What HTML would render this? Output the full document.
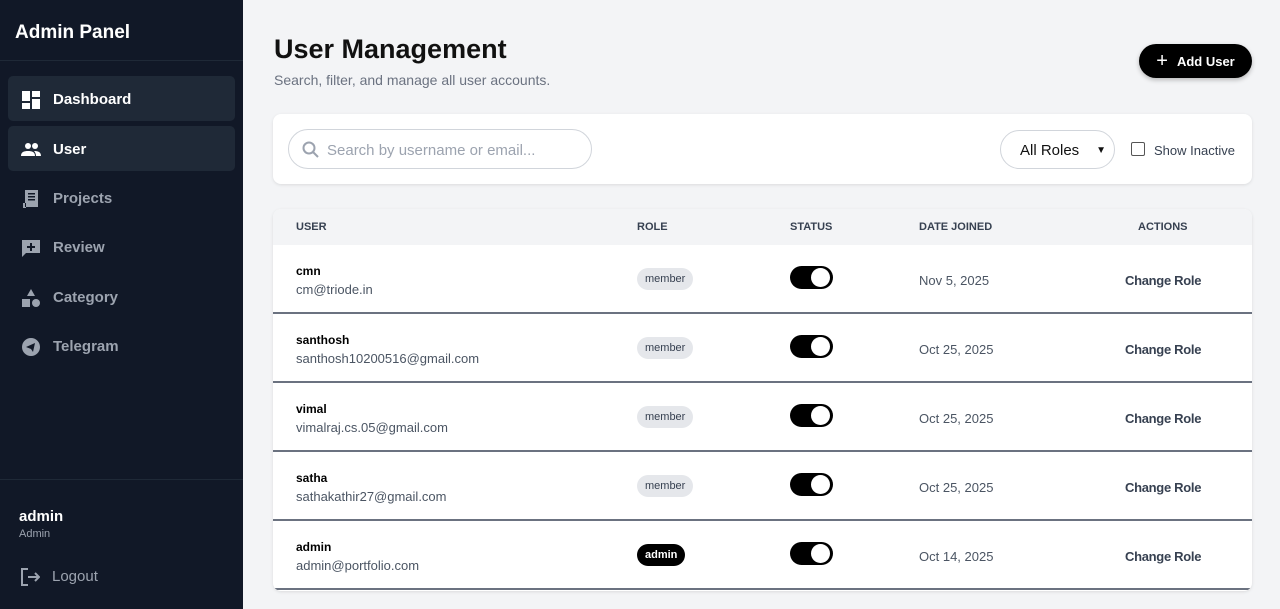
<!DOCTYPE html>
<html><head><style>
*{box-sizing:border-box;margin:0;padding:0}
body{width:1280px;height:609px;overflow:hidden;font-family:"Liberation Sans",sans-serif;background:#f3f4f6;position:relative}
.sb{position:absolute;left:0;top:0;width:243px;height:609px;background:#111827;color:#fff}
.sb h1{font-size:19px;font-weight:600;position:absolute;left:15px;top:22px}
.sb .line{position:absolute;left:0;right:0;height:1px;background:#1f2937}
.nav{position:absolute;left:8px;width:227px;height:45px;border-radius:5px;display:flex;align-items:center;padding-left:13px;padding-top:2px;font-size:15px;font-weight:600;color:#9ca3af}
.nav.a{background:#1f2937;color:#fff}
.nav svg{width:20px;height:20px;margin-right:12px;fill:currentColor}
.main{position:absolute;left:243px;top:0;right:0;bottom:0}
.t{position:absolute;left:31px;top:34px;font-size:27px;font-weight:700;color:#111}
.st{position:absolute;left:31px;top:72px;font-size:14px;color:#6b7280}
.btn{position:absolute;left:896px;top:44px;width:113px;height:34px;background:#000;color:#fff;border-radius:17px;font-size:13px;font-weight:700;display:flex;align-items:center;justify-content:center;box-shadow:0 2px 5px rgba(0,0,0,.25)}
.card{position:absolute;background:#fff;border-radius:8px;box-shadow:0 1px 3px rgba(0,0,0,.1)}
.search{position:absolute;left:15px;top:15px;width:304px;height:40px;border:1px solid #d1d5db;border-radius:20px;font-size:15px;color:#9ca3af;display:flex;align-items:center;padding-left:38px;padding-top:2px}
.sel{position:absolute;left:727px;top:16px;width:115px;height:39px;border:1px solid #d1d5db;border-radius:20px;font-size:15px;color:#111;display:flex;align-items:center;padding-left:19px;padding-top:2px}
.th{position:absolute;top:0;height:36px;line-height:36px;font-size:11px;font-weight:700;color:#374151}
.row{position:absolute;left:0;width:979px;height:69px;border-bottom:2px solid #6b7280}
.row .n{position:absolute;left:23px;top:19px;font-size:12px;font-weight:700;color:#000}
.row .e{position:absolute;left:23px;top:37px;font-size:13px;color:#4b5563}
.badge{position:absolute;left:364px;top:23px;height:22px;padding:0 8px;border-radius:11px;background:#e5e7eb;font-size:11px;line-height:23px;color:#374151}
.badge.ad{background:#000;color:#fff;font-weight:700;left:364px}
.tg{position:absolute;left:517px;top:21px;width:43px;height:23px;border-radius:12px;background:#000}
.tg:after{content:"";position:absolute;right:3px;top:2px;width:19px;height:19px;border-radius:50%;background:#fff}
.d{position:absolute;left:646px;top:28px;font-size:13px;color:#4b5563}
.c{position:absolute;left:852px;top:28px;font-size:13px;font-weight:600;color:#374151;letter-spacing:-0.3px}
</style></head><body>
<div class="sb">
<h1>Admin Panel</h1>
<div class="line" style="top:60px"></div>
<div class="nav a" style="top:76px"><svg viewBox="0 0 20 20"><path d="M1 1h8v10H1zM11 1h8v6h-8zM11 9h8v10h-8zM1 13h8v6H1z"/></svg>Dashboard</div>
<div class="nav a" style="top:126px"><svg viewBox="0 0 20 20"><circle cx="7" cy="6" r="3"/><circle cx="14" cy="6" r="3"/><path d="M0 16c0-4 3-5 7-5s7 1 7 5zM15 16c0-2-1-4-2-5 4 0 7 1 7 5z"/></svg>User</div>
<div class="nav" style="top:175px"><svg viewBox="0 0 20 20"><path fill-rule="evenodd" d="M4 1h13v17H4zM7 4v1.5h7V4zM7 7v1.5h7V7zM7 10v1.5h7V10zM2 14h3v5H2z"/></svg>Projects</div>
<div class="nav" style="top:224px"><svg viewBox="0 0 20 20"><path d="M1 2h18v13H5l-4 4zM9 5h2v3h3v2h-3v3H9v-3H6V8h3z" fill-rule="evenodd"/></svg>Review</div>
<div class="nav" style="top:274px"><svg viewBox="0 0 20 20"><path d="M10 1l4 7H6zM1 11h8v8H1z"/><circle cx="15" cy="15" r="4"/></svg>Category</div>
<div class="nav" style="top:323px"><svg viewBox="0 0 20 20"><path d="M10 1a9 9 0 100 18 9 9 0 000-18zM5 10l9-4-2 9-2-3z"/></svg>Telegram</div>
<div class="line" style="top:479px"></div>
<div style="position:absolute;left:19px;top:508px;font-size:15px;font-weight:700">admin</div>
<div style="position:absolute;left:19px;top:528px;font-size:11px;color:#9ca3af">Admin</div>
<div class="nav" style="top:553px;left:8px;padding-left:12px;font-weight:500"><svg viewBox="0 0 20 20" fill="none" stroke="#9ca3af" stroke-width="2" style="fill:none"><path d="M8 2H2v16h6M8 10h11M15 6l4 4-4 4"/></svg>Logout</div>
</div>
<div class="main">
<div class="t">User Management</div>
<div class="st">Search, filter, and manage all user accounts.</div>
<div class="btn"><span style="font-size:20px;font-weight:400;margin-right:9px;line-height:1">+</span>Add User</div>
<div class="card" style="left:30px;top:114px;width:979px;height:70px">
<div class="search"><svg style="position:absolute;left:13px;top:11px" width="17" height="17" viewBox="0 0 17 17" fill="none" stroke="#9ca3af" stroke-width="2"><circle cx="7" cy="7" r="5.5"/><path d="M11 11l5 5"/></svg>Search by username or email...</div>
<div class="sel">All Roles<span style="position:absolute;right:8px;font-size:10px">&#9660;</span></div>
<div style="position:absolute;left:858px;top:28px;width:14px;height:14px;border:1px solid #555;border-radius:2px"></div>
<div style="position:absolute;left:881px;top:29px;font-size:13px;color:#374151">Show Inactive</div>
</div>
<div class="card" style="left:30px;top:209px;width:979px;height:382px;overflow:hidden">
<div style="position:absolute;left:0;top:0;width:979px;height:36px;background:#f3f4f6"></div>
<div class="th" style="left:23px">USER</div><div class="th" style="left:364px">ROLE</div><div class="th" style="left:517px">STATUS</div><div class="th" style="left:646px">DATE JOINED</div><div class="th" style="left:865px">ACTIONS</div>
<div class="row" style="top:36px"><div class="n">cmn</div><div class="e">cm@triode.in</div><div class="badge">member</div><div class="tg"></div><div class="d">Nov 5, 2025</div><div class="c">Change Role</div></div>
<div class="row" style="top:105px"><div class="n">santhosh</div><div class="e">santhosh10200516@gmail.com</div><div class="badge">member</div><div class="tg"></div><div class="d">Oct 25, 2025</div><div class="c">Change Role</div></div>
<div class="row" style="top:174px"><div class="n">vimal</div><div class="e">vimalraj.cs.05@gmail.com</div><div class="badge">member</div><div class="tg"></div><div class="d">Oct 25, 2025</div><div class="c">Change Role</div></div>
<div class="row" style="top:243px"><div class="n">satha</div><div class="e">sathakathir27@gmail.com</div><div class="badge">member</div><div class="tg"></div><div class="d">Oct 25, 2025</div><div class="c">Change Role</div></div>
<div class="row" style="top:312px"><div class="n">admin</div><div class="e">admin@portfolio.com</div><div class="badge ad">admin</div><div class="tg"></div><div class="d">Oct 14, 2025</div><div class="c">Change Role</div></div>
</div>
</div>
</body></html>
